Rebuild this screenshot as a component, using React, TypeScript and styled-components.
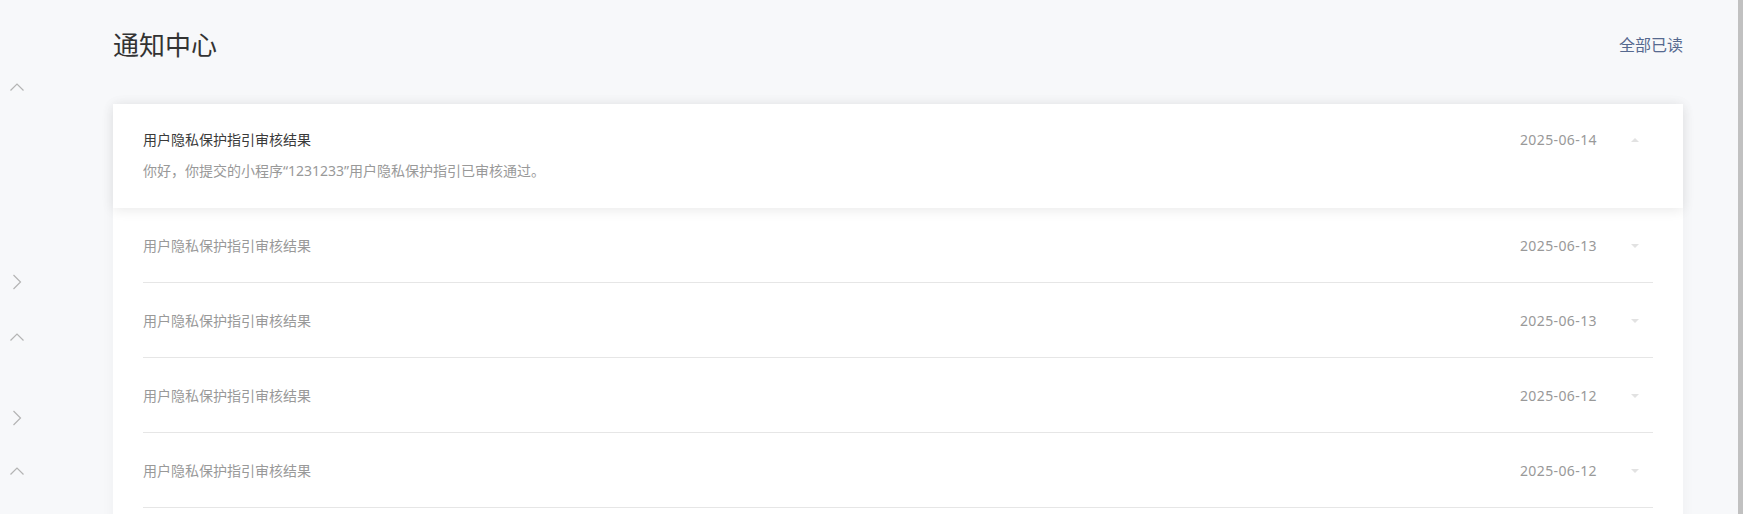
import React from "react";
import styled, { createGlobalStyle } from "styled-components";

interface Notice {
	title: string;
	date: string;
	content?: string;
}

const notices: Notice[] = [
	{
		title: "用户隐私保护指引审核结果",
		date: "2025-06-14",
		content: "你好，你提交的小程序“1231233”用户隐私保护指引已审核通过。",
	},
	{ title: "用户隐私保护指引审核结果", date: "2025-06-13" },
	{ title: "用户隐私保护指引审核结果", date: "2025-06-13" },
	{ title: "用户隐私保护指引审核结果", date: "2025-06-12" },
	{ title: "用户隐私保护指引审核结果", date: "2025-06-12" },
];

const sideItems: { dir: "up" | "right"; gap: number }[] = [
	{ dir: "up", gap: 79 },
	{ dir: "right", gap: 179 },
	{ dir: "up", gap: 39 },
	{ dir: "right", gap: 65 },
	{ dir: "up", gap: 37 },
];

const Chevron = ({ dir }: { dir: "up" | "right" }) => (
	<svg width="16" height="16" viewBox="0 0 16 16">
		<polyline
			points={dir === "up" ? "1.5,11.5 8,5 14.5,11.5" : "4.5,1 11.5,8 4.5,15"}
			fill="none"
			stroke="#b4b4b4"
			strokeWidth="1.2"
		/>
	</svg>
);

const Caret = ({ open }: { open: boolean }) => (
	<svg width="16" height="8" viewBox="0 0 16 8">
		<polygon
			points={open ? "4,6 8,2 12,6" : "4,2 8,6 12,2"}
			fill="#e2e2e2"
		/>
	</svg>
);

const App = () => {
	const [first, ...rest] = notices;
	return (
		<>
			<GlobalStyle />
			<Page>
				<Sidebar>
					{sideItems.map((item, i) => (
						<SideItem key={i} $gap={item.gap}>
							<Chevron dir={item.dir} />
						</SideItem>
					))}
				</Sidebar>
				<Main>
					<Header>
						<PageTitle>通知中心</PageTitle>
						<ReadAll>全部已读</ReadAll>
					</Header>
					<ListCard>
						<OpenItem>
							<ItemHead>
								<ItemTitle $active>{first.title}</ItemTitle>
								<ItemDate>{first.date}</ItemDate>
								<CaretBox>
									<Caret open />
								</CaretBox>
							</ItemHead>
							<ItemContent>{first.content}</ItemContent>
						</OpenItem>
						{rest.map((n, i) => (
							<Row key={i}>
								<ItemTitle>{n.title}</ItemTitle>
								<ItemDate>{n.date}</ItemDate>
								<CaretBox>
									<Caret open={false} />
								</CaretBox>
							</Row>
						))}
					</ListCard>
				</Main>
				<ScrollTrack />
			</Page>
		</>
	);
};

const GlobalStyle = createGlobalStyle`
	html, body {
		margin: 0;
		padding: 0;
		background: #f7f8fa;
		font-family: "Noto Sans", "Noto Sans CJK SC", sans-serif;
	}
`;

const Page = styled.div`
	display: flex;
	flex-direction: row;
	width: 100%;
	height: 514px;
	overflow: hidden;
	background: #f7f8fa;
`;

const Sidebar = styled.aside`
	width: 34px;
	flex-shrink: 0;
	display: flex;
	flex-direction: column;
	align-items: center;
`;

const SideItem = styled.div<{ $gap: number }>`
	margin-top: ${(p) => p.$gap}px;
	width: 16px;
	height: 16px;
	display: flex;
`;

const Main = styled.main`
	flex: 1;
	padding: 27px 55px 0 79px;
	box-sizing: border-box;
	display: flex;
	flex-direction: column;
`;

const Header = styled.header`
	display: flex;
	align-items: center;
	justify-content: space-between;
	height: 36px;
	margin-bottom: 41px;
`;

const PageTitle = styled.h1`
	margin: 0;
	font-size: 26px;
	font-weight: 400;
	line-height: 36px;
	color: #333;
`;

const ReadAll = styled.span`
	font-size: 16px;
	line-height: 36px;
	color: #56698f;
	cursor: pointer;
`;

const ListCard = styled.section`
	background: #fff;
	box-shadow: 0 0 14px rgba(0, 0, 0, 0.04);
	padding-bottom: 40px;
`;

const OpenItem = styled.div`
	height: 104px;
	box-sizing: border-box;
	padding: 26px 30px 0;
	box-shadow: 0 2px 12px rgba(0, 0, 0, 0.09);
	position: relative;
`;

const ItemHead = styled.div`
	display: flex;
	align-items: center;
	height: 20px;
`;

const Row = styled.div`
	display: flex;
	align-items: center;
	height: 75px;
	margin: 0 30px;
	padding-top: 2px;
	box-sizing: border-box;
	border-bottom: 1px solid #e6e6e6;
`;

const ItemTitle = styled.div<{ $active?: boolean }>`
	flex: 1;
	font-size: 14px;
	line-height: 20px;
	color: ${(p) => (p.$active ? "#3a3a3a" : "#999")};
`;

const ItemDate = styled.div`
	font-size: 14px;
	line-height: 20px;
	letter-spacing: 0.4px;
	color: #999;
	width: 80px;
	text-align: right;
`;

const CaretBox = styled.div`
	width: 16px;
	height: 8px;
	margin: 0 10px 0 30px;
	display: flex;
`;

const ItemContent = styled.p`
	margin: 11px 0 0;
	font-size: 14px;
	line-height: 20px;
	color: #999;
`;

const ScrollTrack = styled.div`
	width: 5px;
	flex-shrink: 0;
	background: #c1c1c1;
`;

export default App;
